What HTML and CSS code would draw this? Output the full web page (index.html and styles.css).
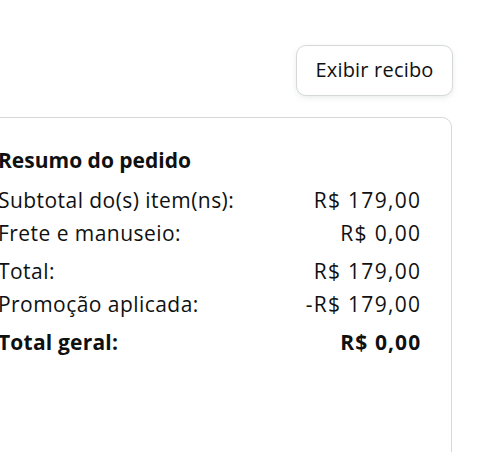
FILE: index.html
```html
<!DOCTYPE html>
<html lang="pt-BR">
<head>
<meta charset="utf-8">
<link rel="stylesheet" href="styles.css">
</head>
<body>
<div class="page">
  <div class="actions">
    <button class="btn">Exibir recibo</button>
  </div>
  <section class="card">
    <h2 class="title">Resumo do pedido</h2>
    <div class="group">
      <div class="row"><span class="label">Subtotal do(s) item(ns):</span><span class="value">R$ 179,00</span></div>
      <div class="row"><span class="label">Frete e manuseio:</span><span class="value">R$ 0,00</span></div>
    </div>
    <div class="group">
      <div class="row"><span class="label">Total:</span><span class="value">R$ 179,00</span></div>
      <div class="row"><span class="label">Promoção aplicada:</span><span class="value">-R$ 179,00</span></div>
    </div>
    <div class="row total"><span class="label">Total geral:</span><span class="value">R$ 0,00</span></div>
  </section>
</div>
</body>
</html>
```
FILE: styles.css
```css
html, body {
  margin: 0;
  padding: 0;
  background: #fff;
}
body {
  font-family: "Open Sans", "Noto Sans", sans-serif;
  color: #0f1111;
  overflow: hidden;
}
.page {
  display: flex;
  flex-direction: column;
  padding-top: 45px;
}
.actions {
  display: flex;
  justify-content: flex-end;
  padding-right: 47px;
}
.btn {
  font-family: inherit;
  font-size: 20px;
  color: #0f1111;
  background: #fff;
  border: 1.5px solid #d5d9d9;
  border-radius: 10px;
  height: 51px;
  width: 157px;
  box-shadow: 0 2px 5px rgba(213, 217, 217, 0.5);
  padding: 0 0 3px;
  letter-spacing: 0.2px;
}
.card {
  margin: 21px 48px 0 -33px;
  border: 1.5px solid #d5d9d9;
  border-radius: 10px;
  padding: 26px 31px 120px 30px;
  font-size: 21px;
  line-height: 33px;
}
.title {
  margin: 0 0 7px;
  font-size: 21px;
  font-weight: 700;
  line-height: 33px;
}
.group {
  margin-bottom: 5px;
}
.row {
  display: flex;
  justify-content: space-between;
}
.label {
  letter-spacing: 0.45px;
}
.value {
  letter-spacing: 1.3px;
  margin-right: -1.3px;
}
.total {
  margin-top: 4px;
  font-weight: 700;
}
.total .label {
  letter-spacing: 0.2px;
}
.total .value {
  letter-spacing: 1.1px;
}
```
